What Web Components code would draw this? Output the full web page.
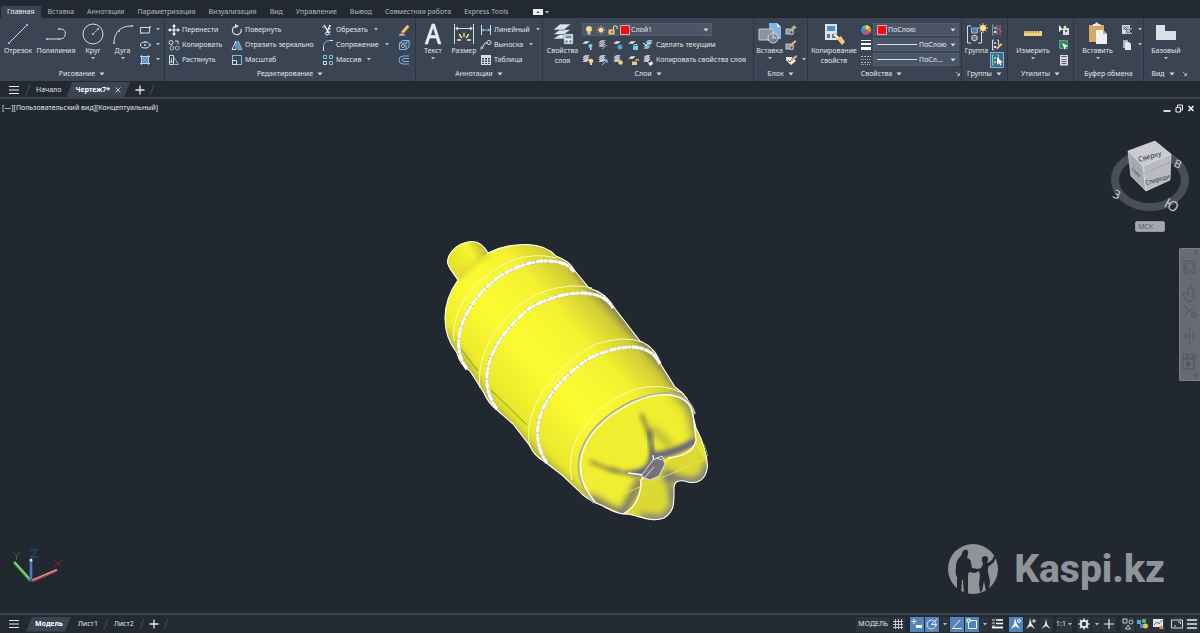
<!DOCTYPE html>
<html lang="ru">
<head>
<meta charset="utf-8">
<title>Чертеж7</title>
<style>
html,body{height:100%;margin:0}
body{background:#212830;color:#e2e5e9;font:7px/10px "Noto Sans","Open Sans",sans-serif;overflow:hidden}
</style>
</head>
<body>
<cad-app></cad-app>
<script>
const define = (name, css, html) => customElements.define(name, class extends HTMLElement {
  constructor() { super(); this.attachShadow({ mode: 'open' }); }
  connectedCallback() {
    const t = document.createElement('template');
    t.innerHTML = `<style>*{box-sizing:border-box}button,select{font:inherit;color:inherit;background:none;border:0;padding:0;margin:0;white-space:nowrap}${css}</style>${html(this)}`;
    this.shadowRoot.replaceChildren(t.content.cloneNode(true));
  }
});
const at = (e, n) => e.getAttribute(n) || '';

/* ---------- icons ---------- */
const W = '#d9dde2', B = '#7fc0e6', G = '#ffd479';
const dot = (x, y, c = B) => `<rect x="${x - 1}" y="${y - 1}" width="2" height="2" fill="${c}"/>`;
const sheets = (x, y, n, c = W) => Array.from({ length: n }, (_, i) => `<path d="M${x} ${y + i * 2 + 3}l3-3h5l-3 3z" fill="${c}" stroke="#3b4453" stroke-width=".4"/>`).join('');
const bulb = (x, y, c = G) => `<circle cx="${x}" cy="${y}" r="2.3" fill="${c}"/><rect x="${x - 1}" y="${y + 2}" width="2" height="2" fill="#cfd3d8"/>`;
const pencil = (x, y) => `<path d="M${x} ${y}l5-5 1.4 1.4-5 5z" fill="#e9b872"/>`;
const blk = `<rect x="1" y="5" width="7" height="5" fill="#8d949e" stroke="${W}" stroke-width=".8"/><circle cx="6.5" cy="8.5" r="2" fill="#59616e" stroke="${W}" stroke-width=".8"/>`;
const I = {
  line: [24, 24, `<path d="M3 21L21 3" stroke="${W}" stroke-width="1"/>${dot(3, 21)}${dot(21, 3)}`],
  pline: [24, 24, `<path d="M2 17H16c7 0 7-10 1-10h-3" fill="none" stroke="${W}"/>${dot(3, 17)}${dot(15, 17)}${dot(15, 7)}`],
  circle: [24, 24, `<circle cx="12" cy="12" r="10" fill="none" stroke="${W}"/><path d="M12 12l5-5" stroke="${B}"/>${dot(12, 12)}${dot(17, 7)}`],
  arc: [24, 24, `<path d="M3 21C3 10 10 4 20 4" fill="none" stroke="${W}"/>${dot(3, 21)}${dot(8, 9)}${dot(21, 4)}`],
  rect: [12, 12, `<path d="M1.500 3.500h9v5.500h-9z" fill="none" stroke="${W}"/>${dot(2, 9)}${dot(11, 3)}`],
  ellipse: [12, 12, `<ellipse cx="6" cy="6" rx="4.500" ry="3" fill="none" stroke="${W}"/>${dot(6, 6)}${dot(11, 6)}${dot(6, 3)}`],
  hatch: [12, 12, `<path d="M2 2h8v8H2z" fill="#5a8fc4"/><path d="M1 2.500h10M1 9.500h10M2.500 1v10M9.500 1v10" stroke="${W}" stroke-width=".8"/><path d="M4 4l4 4M4 7l1 1M7 4l1 1" stroke="#a9d2f0" stroke-width=".6"/>`],
  move: [12, 12, `<path d="M6 1v10M1 6h10" stroke="#fff" stroke-width="1.200"/><path d="M6 0L4 2.500h4zM6 12L4 9.500h4zM0 6l2.500-2v4zM12 6L9.500 4v4z" fill="#fff"/>`],
  copy: [12, 12, `<g fill="none"><circle cx="3" cy="3.500" r="2" stroke="${W}"/><path d="M7 2h3v3" stroke="${W}"/><circle cx="4" cy="9" r="2" stroke="${B}"/><circle cx="9.300" cy="9" r="2" stroke="${B}"/></g>`],
  stretch: [12, 12, `<path d="M1.500 1.500h4v9h-4z" fill="none" stroke="${W}"/><path d="M5.500 3l5 7.500h-5" fill="none" stroke="${B}"/><path d="M3.500 4v4M2 8h4" stroke="#fff" stroke-width=".7"/>`],
  rotate: [12, 12, `<path d="M5 2a4.400 4.400 0 1 0 5 3" fill="none" stroke="${W}" stroke-width="1.200"/><path d="M4 0l4 2-4 2.500z" fill="${W}"/>`],
  mirror: [12, 12, `<path d="M5 2v8.500H1z" fill="none" stroke="${W}"/><path d="M7 2v8.500h4z" fill="#4b86bd" stroke="${B}"/>`],
  scale: [12, 12, `<path d="M1.500 1.500h9v9h-9z" fill="none" stroke="${B}"/><path d="M1.500 6.500h4v4h-4z" fill="none" stroke="${W}"/>`],
  trim: [12, 12, `<path d="M2 1l5 8M8 1L5 8" stroke="#fff" stroke-width="1.300"/><path d="M8 1v10" stroke="${W}" stroke-dasharray="2 1"/><circle cx="5" cy="9.500" r="1.500" fill="none" stroke="#fff"/><path d="M0 3h3" stroke="${B}"/>`],
  fillet: [12, 12, `<path d="M1.500 12V8C1.500 4 4 1.500 8 1.500h3" fill="none" stroke="${B}"/><path d="M1.500 12V8M8 1.500h3" stroke="${W}"/>`],
  array: [12, 12, `<g fill="none" stroke="${B}"><path d="M1.500 1.500h3v3h-3zM7.500 1.500h3v3h-3zM7.500 7.500h3v3h-3z"/><path d="M1.500 7.500h3v3h-3z" stroke="${W}"/></g>`],
  erase: [12, 12, `<path d="M3 8l6-7 2.500 1.500L6 9z" fill="#f2c078"/><path d="M3 8l3 1-1 2H2z" fill="#e5726b"/><path d="M1 11h6" stroke="${W}"/>`],
  box: [12, 12, `<path d="M1.500 4h6.500v6.500h-6.500zM1.500 4l3-2.500h6.500L8 4M11 1.500V8l-3 2.500" fill="none" stroke="${B}"/><circle cx="5" cy="7" r="1.600" fill="none" stroke="${W}" stroke-width=".7"/>`],
  offset: [12, 12, `<path d="M11 2H5a4 4 0 0 0 0 8h6M11 4.500H6a1.500 1.500 0 0 0 0 3h5" fill="none" stroke="${B}" stroke-width=".9"/>`],
  text: [24, 24, `<path d="M4 22L11 2h2.500L20 22h-2.800l-1.900-6H8.600l-1.900 6zM9.500 13.500h5.200L12.200 5z" fill="#eceef0" stroke="#eceef0" stroke-width=".6"/>`],
  dim: [24, 24, `<path d="M2.500 2v20M21.500 2v20M4 6.500h16" stroke="${W}"/><path d="M3 6.500l3-2v4zM21 6.500l-3-2v4z" fill="${W}"/><path d="M12 11v4M7 12l3 4M17 12l-3 4M5 18h4M19 18h-4" stroke="#ffe2a0" stroke-width="1.300"/>`],
  linear: [12, 12, `<path d="M1.500 1v10M10.500 1v10" stroke="${W}"/><path d="M2 6h8" stroke="${B}"/><path d="M2 6l2-1.500v3zM10 6L8 4.500v3z" fill="${B}"/>`],
  leader: [12, 12, `<circle cx="9" cy="3.500" r="2" fill="none" stroke="${W}"/><path d="M7 4H5L2 9" fill="none" stroke="${W}"/><path d="M0 11l1-4 3 2z" fill="${B}"/>`],
  table: [12, 12, `<path d="M1 1h10v10H1z" fill="${W}"/><path d="M2 4h2v1.500H2zM5 4h2v1.500H5zM8 4h2v1.500H8zM2 6.500h2V8H2zM5 6.500h2V8H5zM8 6.500h2V8H8zM2 9h2v1H2zM5 9h2v1H5zM8 9h2v1H8z" fill="#3b4453"/>`],
  layers: [24, 24, `<g fill="#dfe2e6" stroke="#3b4453" stroke-width=".6"><path d="M2 17l7-5h11l-7 5z"/><path d="M2 12.500l7-5h11l-7 5z"/><path d="M2 8l7-6h11l-7 6z"/></g><path d="M13 12h9v10h-9z" fill="#e9edf0" stroke="#7a8797" stroke-width=".6"/><path d="M14.500 13.500h6v3h-6z" fill="#5b97cc"/><path d="M14.500 18.500h2v2h-2zM18.500 18.500h2v2h-2z" fill="#5c6673"/>`],
  bulb: [12, 12, `<circle cx="6" cy="5" r="3" fill="#ffd58a"/><path d="M4.500 7.500h3v3h-3z" fill="#d7c9a8"/>`],
  sun: [12, 12, `<path d="M6 1.500v9M1.500 6h9M3 3l6 6M9 3l-6 6" stroke="#f0c26c" stroke-width=".8"/><circle cx="6" cy="6" r="2.300" fill="#ffd98f"/>`],
  unlock: [12, 12, `<path d="M1.500 5.500h6v5h-6z" fill="#f3c878"/><path d="M6.500 5.500V3.500a1.800 1.800 0 0 1 3.600 0V5" fill="none" stroke="#e9d3a4" stroke-width="1.100"/><path d="M4 7h1.500v2H4z" fill="#5b4a2a"/>`],
  red: [12, 12, `<path d="M1.500 1.500h9v9h-9z" fill="#f30b12" stroke="#f1c9cb" stroke-width=".8"/>`],
  l1: [12, 12, sheets(0, 2, 1) + `<circle cx="8.500" cy="7" r="2" fill="#7fd6e8"/><path d="M8 9h1.500v2H8z" fill="#d5dae0"/>`],
  l2: [12, 12, sheets(1, 1, 3, '#bfc5cd') + `<path d="M5 10l5-4" stroke="#7fc0e6"/>`],
  l3: [12, 12, sheets(1, 2, 1) + `<path d="M8 5v6M5 8h6M6 6l4 4M10 6l-4 4" stroke="#5cc3ea" stroke-width=".9"/>`],
  l4: [12, 12, sheets(1, 2, 1) + `<path d="M6 7h5v4H6z" fill="#6ed2ef"/><path d="M7 7V5.500h3V7" fill="none" stroke="#bfe9f5" stroke-width=".8"/>`],
  l5: [12, 12, sheets(1, 5, 2, '#8dc4ea') + sheets(3, 1, 2, '#a8d4f2') + `<path d="M1 4l4 3" stroke="#fff"/>`],
  m1: [12, 12, sheets(0, 1, 3) + bulb(9, 7)],
  m2: [12, 12, sheets(1, 1, 3) + `<path d="M5 11l5-5M10 6v3M10 6H7" stroke="#a3d4f4"/>`],
  m3: [12, 12, sheets(1, 1, 3) + `<circle cx="8.500" cy="8.500" r="2.200" fill="${G}"/>`],
  m4: [12, 12, sheets(1, 2, 1) + `<path d="M5 7.500h5v3.500H5z" fill="#f3c878"/><path d="M9 7V5.500h2.500V7" fill="none" stroke="#f5deb0" stroke-width=".8"/>`],
  m5: [12, 12, sheets(1, 1, 3) + `<path d="M5 7l2 2 3-2 1 3-3 2z" fill="#eef0f2"/>`],
  insert: [24, 24, `<path d="M11 1h8l4 4v12H11z" fill="#7db7e4"/><path d="M19 1v4h4z" fill="#d5eafa"/><path d="M1 7h14v11H1z" fill="#8b929c" stroke="#c6cbd1"/><circle cx="15" cy="16" r="5" fill="#7a828d" fill-opacity=".8" stroke="#d5d9de"/><path d="M15 12v4h3" fill="none" stroke="#d5d9de"/>`],
  b1: [12, 12, blk + `<path d="M9 1v5M6.500 3.500h5M7.500 2l3 3M10.500 2l-3 3" stroke="${G}" stroke-width=".7"/>`],
  b2: [12, 12, blk + pencil(5, 6)],
  b3: [12, 12, `<path d="M1 3h6l4 4-5 4-5-5z" fill="#eceef0"/><path d="M3 6l2 2 4-6" fill="none" stroke="#4a5362"/>` + pencil(6, 6)],
  matchp: [24, 24, `<path d="M3 2h12v16H3z" fill="#dfe3e7"/><path d="M5 4h8v5H5z" fill="#4d8fc7"/><path d="M5 12h3v4H5zM10 12h3v4h-3z" fill="#6a7380"/><path d="M11 13l5 5 2-2-5-5z" fill="#f6f0e4" stroke="#7b7362" stroke-width=".5"/><path d="M15 17l4-3 4 6-3 3z" fill="#edc88a"/>`],
  wheel: [12, 12, `<path d="M6 6V1a5 5 0 0 1 4.300 2.500z" fill="#f5e14b"/><path d="M6 6l4.300-2.500a5 5 0 0 1 0 5z" fill="#f0913a"/><path d="M6 6l4.300 2.500A5 5 0 0 1 6 11z" fill="#e8445a"/><path d="M6 6v5a5 5 0 0 1-4.300-2.500z" fill="#9a59d6"/><path d="M6 6L1.700 8.500a5 5 0 0 1 0-5z" fill="#3f8fe0"/><path d="M6 6L1.700 3.500A5 5 0 0 1 6 1z" fill="#57c267"/>`],
  weight: [12, 12, `<path d="M1 1.500h10" stroke="#fff"/><path d="M1 5h10" stroke="#fff" stroke-width="2"/><path d="M1 9.500h10" stroke="#fff" stroke-width="3"/>`],
  ltype: [12, 12, `<path d="M1 2.500h10M1 8.500h10" stroke="#aeb5be" stroke-dasharray="2 1"/><path d="M1 5.500h10M1 10.500h10" stroke="#aeb5be" stroke-dasharray="1 1"/>`],
  group: [24, 24, `<path d="M6 4H2.500v17H6M13 21h3.500V10" fill="none" stroke="${W}"/><path d="M6.500 6h6v5h-6z" fill="#4b7fb3" stroke="${B}"/><circle cx="9.500" cy="16" r="2.800" fill="#6a7481" stroke="${W}"/><path d="M18 1v10M13 6h10M14.500 2.500l7 7M21.500 2.500l-7 7" stroke="#f3bf62"/><circle cx="18" cy="6" r="3" fill="#ffdc96"/>`],
  g1: [12, 12, `<path d="M3 1H1.500v10H3M6 1v10" fill="none" stroke="#8d96a3"/><circle cx="4" cy="4" r="1.300" fill="${B}"/><circle cx="4" cy="8" r="1.300" fill="${W}"/><path d="M9 1v10M7 4l4 4" stroke="#d85d66"/>`],
  g2: [12, 12, `<path d="M3 1H1.500v10H3M6 1h1.500v5" fill="none" stroke="${W}"/><circle cx="4" cy="4" r="1.300" fill="${B}"/><circle cx="4" cy="8" r="1.300" fill="${W}"/>` + pencil(5, 9)],
  g3: [12, 12, `<path d="M3 1H1.500v10H3M6 1h1.500v4" fill="none" stroke="#6fe0a0"/><circle cx="4" cy="4" r="1.200" fill="#6fe0a0"/><circle cx="4" cy="8" r="1.200" fill="#6fe0a0"/><path d="M6 3v8l2-2 1.500 2.500 1-.6L9.300 8.500H12z" fill="#fff"/>`],
  ruler: [24, 24, `<path d="M3 9h18v5H3z" fill="#f1cf7e"/><path d="M5 9v2M7.500 9v2M10 9v2M12.500 9v2M15 9v2M17.500 9v2" stroke="#7b6634" stroke-width=".7"/>`],
  u1: [12, 12, `<path d="M5 4h6v7H5z" fill="${W}"/><path d="M7 6h2v2H7z" fill="#59616e"/><path d="M1 1v7l2-2h2z" fill="#fff"/><circle cx="7" cy="3" r="1.500" fill="${G}"/>`],
  u2: [12, 12, `<path d="M1.500 1.500h8v8h-8z" fill="#2f8a5a" stroke="#56c98a" stroke-dasharray="2 1"/><path d="M4 4l6 3-2.500 1L7 11z" fill="#fff"/>`],
  calc: [12, 12, `<path d="M2 1h8v10.500H2z" fill="${W}"/><path d="M3 2.500h6M3.500 5.500h5M3.500 7.500h5M3.500 9.500h5" stroke="#4c5563" stroke-width=".9"/>`],
  paste: [24, 24, `<path d="M3 3h15v17H3z" fill="#d7a765"/><path d="M7 4V2h2a1.800 1.800 0 0 1 3.500 0h2v2z" fill="#e8eaec"/><path d="M10 8h7l4 4v10H10z" fill="#eef0f2"/><path d="M17 8v4h4z" fill="#aab1ba"/>`],
  cut: [12, 12, `<path d="M1 1h8v9H1z" fill="${W}"/><path d="M2 3h6M2 5h4" stroke="#59616e" stroke-width=".8"/><path d="M4 4l7 6M11 4L5 9" stroke="#2d3542" stroke-width="2"/><path d="M4 4l7 6M11 4L5 9" stroke="#fff" stroke-width=".9"/>`],
  pages: [12, 12, `<path d="M2 1h5v8H2z" fill="#aab1ba"/><path d="M4 3h4l2 2v6H4z" fill="#e6e8eb"/>`],
  base: [24, 24, `<path d="M2 3h9v6h11v9H2z" fill="#dcdfe4"/>`],
  /* bars */
  menu: [12, 12, `<path d="M1 2.500h10M1 6h10M1 9.500h10" stroke="#e6e8eb" stroke-width="1.200"/>`],
  plus: [12, 12, `<path d="M6 1.500v9M1.500 6h9" stroke="#e6e8eb" stroke-width="1.300"/>`],
  slash: [8, 14, `<path d="M2 12L6 2" stroke="#454e5c"/>`],
  close: [8, 8, `<path d="M1.500 1.500l5 5M6.500 1.500l-5 5" stroke="#c3c8cf"/>`],
  caret: [6, 4, `<path d="M.5.500h5L3 3.500z" fill="#d5d9de"/>`],
  mini: [4, 3, `<path d="M0 0h4L2 2.500z" fill="#b9bfc8"/>`],
  launch: [6, 6, `<path d="M1 1l3 3M4.500 2v2.500H2" fill="none" stroke="#b9bfc8" stroke-width=".9"/>`],
  ribbonmin: [10, 6, `<path d="M0 0h10v6H0z" fill="#f0f1f3"/><path d="M3.500 4h3L5 2z" fill="#3b4453"/>`],
  wmin: [10, 10, `<path d="M1.500 8h7" stroke="#f0f1f3" stroke-width="1.800"/>`],
  wres: [10, 10, `<path d="M2 4.500h4.500V9H2zM3.500 4V2h5v5H7" fill="none" stroke="#f0f1f3"/>`],
  wclose: [10, 10, `<path d="M2.500 3l5 5M7.500 3l-5 5" stroke="#f0f1f3" stroke-width="1.600"/>`],
  sgrid: [14, 14, `<path d="M4.500 2v10M7.500 2v10M10.500 2v10M2 4.500h10M2 7.500h10M2 10.500h10" stroke="#cfd4da" stroke-width=".9"/>`],
  sdyn: [14, 14, `<path d="M4 2v5M1.500 4.500h5" stroke="#fff"/><path d="M6 8h6v3H6z" fill="#fff"/>`],
  spolar: [14, 14, `<circle cx="6.500" cy="7.500" r="4.500" fill="none" stroke="#dfeaf5"/><path d="M6.500 7.500L12 2M6.500 7.500H12" stroke="#dfeaf5"/>`],
  sang: [14, 14, `<path d="M12 11.500H2.500L10 3" fill="none" stroke="#e7eff7"/>`],
  sosnap: [14, 14, `<path d="M3.500 3.500h8v8h-8z" fill="none" stroke="#e7eff7"/><path d="M2 2h3v3H2z" fill="#5384b8" stroke="#fff"/>`],
  slw: [14, 14, `<path d="M2 3h3M2 6h3M2 9h3" stroke="#d5d9de"/><path d="M6 3h7M6 6.500h7" stroke="#fff" stroke-width="1.400"/><path d="M2 10.500h11" stroke="#fff" stroke-width="1.800"/>`],
  sann: [14, 14, `<path d="M6 1l1.500 5.500 3.500 5.500-4.500-3L2 12l3-5z" fill="#fff"/><circle cx="10" cy="4" r="1.500" fill="none" stroke="#fff"/>`],
  sann2: [14, 14, `<path d="M6 1l1.500 5.500 3.500 5.500-4.500-3L2 12l3-5z" fill="#e8eaed"/><path d="M10 2v4M8 4h4" stroke="#e8eaed"/>`],
  sann3: [14, 14, `<path d="M7 2l1.200 5.500 3.500 4.500L7 9l-4.700 3 3.500-4.500z" fill="#e8eaed"/>`],
  sgear: [14, 14, `<circle cx="7" cy="7" r="3.200" fill="none" stroke="#eceef0" stroke-width="1.800"/><path d="M7 1.500v2M7 10.500v2M1.500 7h2M10.500 7h2M3 3l1.500 1.500M9.500 9.500L11 11M11 3L9.500 4.500M3 11l1.500-1.500" stroke="#eceef0" stroke-width="1.500"/>`],
  splus: [14, 14, `<path d="M7 2v10M2 7h10" stroke="#e6e8eb" stroke-width="1.200"/>`],
  siso: [14, 14, `<g fill="none" stroke="#cfd4da" stroke-width=".9"><path d="M2 2h4v4H2zM4.500 12h5L7 8z"/><circle cx="10" cy="5" r="2"/></g>`],
  sperf: [14, 14, `<path d="M1 3h4v4H1z" fill="#5aa3dc"/><path d="M6 2h4v4H6z" fill="#58b067"/><path d="M4 7h4v4H4z" fill="#4d7fd0"/><circle cx="9.500" cy="9" r="2.500" fill="#e7c34f"/>`],
  sclean: [14, 14, `<path d="M2 2h10v8H2z" fill="#dfe2e6"/><path d="M3 8l3-3 2 2 3-4" fill="none" stroke="#6a7380"/><path d="M8 12l2-4 3 4z" fill="#e08a3c"/>`],
  sfull: [14, 14, `<path d="M1.500 3h11v8h-11z" fill="none" stroke="#d5d9de"/><path d="M8 5h2.500v2M4 9h2" fill="none" stroke="#d5d9de"/>`],
  smenu: [14, 14, `<path d="M2 3h10M2 7h10M2 11h10" stroke="#e6e8eb" stroke-width="1.300"/>`]
};
define('cad-icon', ':host{display:block;flex:none}svg{display:block}', e => {
  const [w, h, s] = I[at(e, 'name')];
  return `<svg width="${w}" height="${h}" viewBox="0 0 ${w} ${h}" aria-hidden="true">${s}</svg>`;
});
const ico = n => `<cad-icon name="${n}"></cad-icon>`;

/* ---------- ribbon ---------- */
define('cad-panel', `
:host{display:flex;flex-direction:column;min-width:0;border-right:1px solid #2d3542;padding-top:4px}
:host([last]){border:0}
.body{display:grid;grid-template-columns:var(--cols);height:45px;padding-left:var(--pad,0px)}
footer{display:flex;height:14px;align-items:center}
.t{flex:1;display:flex;gap:4px;align-items:center;justify-content:center;white-space:nowrap}`,
  e => `<div class="body"><slot></slot></div><footer><button class="t">${at(e, 'label')}${e.hasAttribute('plain') ? '' : ico('caret')}</button>${e.hasAttribute('launch') ? `<button aria-label="Параметры">${ico('launch')}</button>` : ''}</footer>`);

define('cad-tool', `
:host{display:block;min-width:0}
button{display:flex;flex-direction:column;align-items:center;width:100%;line-height:10px}
.l{display:flex;justify-content:center;white-space:nowrap;text-align:center}
cad-icon[name=mini]{margin-top:1px}`,
  e => `<button>${ico(at(e, 'icon'))}<span class="l"><span>${at(e, 'label').replace('|', '<br>')}</span></span>${e.hasAttribute('caret') ? ico('mini') : ''}</button>`);

define('cad-stack', `:host{display:grid;grid-template-rows:repeat(3,15px);align-items:center;justify-items:start;min-width:0}`, () => '<slot></slot>');
define('cad-row', `:host{display:flex;align-items:center;gap:3px}`, () => '<slot></slot>');

define('cad-cmd', `
:host{display:block}
button{display:flex;align-items:center;gap:2px;height:14px}
cad-icon[name=mini]{margin-left:4px}
:host(:not([label])) cad-icon[name=mini]{margin-left:3px}
:host([on]) button{background:#3f6a96;outline:1px solid #7fb0dc}`,
  e => `<button aria-label="${at(e, 'label') || at(e, 'hint')}">${ico(at(e, 'icon'))}${at(e, 'label')}${e.hasAttribute('caret') ? ico('mini') : ''}</button>`);

define('cad-select', `
:host{display:block}
label{display:flex;align-items:center;height:13px;padding:0 2px 0 var(--in,0px);background:#4a5567;border:1px solid #525d6f}
select{appearance:none;flex:1;min-width:0;height:10px;outline:0;overflow:hidden}
::slotted(hr){flex:none;width:40px;border:0;border-top:1px solid #dfe3e8;margin:0 2px 0 3px}`,
  e => `<label><slot></slot><select aria-label="${at(e, 'hint')}"><option>${at(e, 'value')}</option></select>${ico('caret')}</label>`);

const tool = (i, l, c = 1) => `<cad-tool icon="${i}" label="${l}" ${c ? 'caret' : ''}></cad-tool>`;
const cmd = (i, l, c) => `<cad-cmd icon="${i}" label="${l}" ${c ? 'caret' : ''}></cad-cmd>`;
const act = (i, h, c) => `<cad-cmd icon="${i}" hint="${h}" ${c ? 'caret' : ''}></cad-cmd>`;
const stack = (...a) => `<cad-stack>${a.join('')}</cad-stack>`;

define('cad-ribbon', `
:host{display:grid;background:#3b4453;height:63px;
grid-template-columns:minmax(0,165fr) minmax(0,251fr) minmax(0,127fr) minmax(0,211fr) minmax(0,54fr) minmax(0,154fr) minmax(0,46fr) minmax(0,66fr) minmax(0,70fr) minmax(0,44fr) minmax(0,12fr)}
.layer{width:130px;--in:0px}
.prop{width:calc(100% - 2px)}`, () => `
<cad-panel label="Рисование" style="--cols:36fr 40fr 34fr 25fr 29fr">
${tool('line', 'Отрезок', 0)}${tool('pline', 'Полилиния', 0)}${tool('circle', 'Круг')}${tool('arc', 'Дуга')}
<cad-stack style="padding-left:4px">${act('rect', 'Прямоугольник', 1)}${act('ellipse', 'Эллипс', 1)}${act('hatch', 'Штриховка', 1)}</cad-stack></cad-panel>
<cad-panel label="Редактирование" style="--pad:3px;--cols:63fr 91fr 76fr 17fr">
${stack(cmd('move', 'Перенести'), cmd('copy', 'Копировать'), cmd('stretch', 'Растянуть'))}
${stack(cmd('rotate', 'Повернуть'), cmd('mirror', 'Отразить зеркально'), cmd('scale', 'Масштаб'))}
${stack(cmd('trim', 'Обрезать', 1), cmd('fillet', 'Сопряжение', 1), cmd('array', 'Массив', 1))}
${stack(act('erase', 'Стереть'), act('box', 'Расчленить'), act('offset', 'Подобие'))}</cad-panel>
<cad-panel label="Аннотации" style="--pad:2px;--cols:30fr 32fr 62fr">
${tool('text', 'Текст')}${tool('dim', 'Размер', 0)}
${stack(cmd('linear', 'Линейный', 1), cmd('leader', 'Выноска', 1), cmd('table', 'Таблица'))}</cad-panel>
<cad-panel label="Слои" style="--cols:39fr 171fr">
${tool('layers', 'Свойства|слоя', 0)}
${stack(`<cad-select class="layer" value="Слой1" hint="Слой">${['bulb', 'sun', 'unlock', 'red'].map(ico).join('')}</cad-select>`,
    `<cad-row>${act('l1', 'Отключить слой')}${act('l2', 'Изолировать')}${act('l3', 'Заморозить')}${act('l4', 'Блокировать')}${cmd('l5', 'Сделать текущим')}</cad-row>`,
    `<cad-row>${act('m1', 'Включить слои')}${act('m2', 'Отменить изоляцию')}${act('m3', 'Разморозить')}${act('m4', 'Разблокировать')}${cmd('m5', 'Копировать свойства слоя')}</cad-row>`)}</cad-panel>
<cad-panel label="Блок" style="--cols:31fr 22fr">
${tool('insert', 'Вставка')}${stack(act('b1', 'Создать'), act('b2', 'Редактировать'), act('b3', 'Атрибуты', 1))}</cad-panel>
<cad-panel label="Свойства" launch style="--cols:52fr 13fr 88fr">
${tool('matchp', 'Копирование|свойств', 0)}
${stack(ico('wheel'), ico('weight'), ico('ltype'))}
${stack(`<cad-select class="prop" value="ПоСлою" hint="Цвет" style="--in:2px">${ico('red')}</cad-select>`,
    `<cad-select class="prop" value="ПоСлою" hint="Вес линий"><hr></cad-select>`,
    `<cad-select class="prop" value="ПоСл..." hint="Тип линий"><hr></cad-select>`)}</cad-panel>
<cad-panel label="Группы" style="--cols:29fr 16fr">
${tool('group', 'Группа', 0)}${stack(act('g1', 'Разгруппировать'), act('g2', 'Изменить группу'), '<cad-cmd on icon="g3" hint="Выбор групп"></cad-cmd>')}</cad-panel>
<cad-panel label="Утилиты" style="--cols:50fr 15fr">
${tool('ruler', 'Измерить')}${stack(act('u1', 'Быстрый выбор'), act('u2', 'Выбрать все'), act('calc', 'Калькулятор'))}</cad-panel>
<cad-panel label="Буфер обмена" plain style="--cols:47fr 22fr">
${tool('paste', 'Вставить')}${stack(act('cut', 'Вырезать', 1), act('pages', 'Копировать', 1))}</cad-panel>
<cad-panel label="Вид" launch last style="--cols:1fr">${tool('base', 'Базовый')}</cad-panel>`);

define('cad-tabs', `
:host{display:flex;gap:1px;height:18px;padding:6px 0 0 1px;background:#222933;color:#b3b9c2}
button{height:12px;padding:0 6px;line-height:12px}
.on{background:#3b4453;color:#f2f3f5}
.min{display:flex;align-items:center;gap:2px;margin-left:12px}`, () =>
  ['Главная', 'Вставка', 'Аннотации', 'Параметризация', 'Визуализация', 'Вид', 'Управление', 'Вывод', 'Совместная работа', 'Express Tools']
    .map((t, i) => `<button class="${i ? '' : 'on'}">${t}</button>`).join('') +
  `<button class="min" aria-label="Свернуть ленту">${ico('ribbonmin')}${ico('mini')}</button>`);

/* ---------- document and layout tabs ---------- */
define('cad-sheet', `
:host{display:block}
button{display:flex;align-items:center;gap:4px;height:15px;padding:0 4px}
:host([on]) button{padding:0 8px 0 9px;font-weight:700;color:#fff;background:#3b4453;clip-path:polygon(6px 0,100% 0,calc(100% - 6px) 100%,0 100%)}`,
  () => '<button><slot></slot></button>');

define('cad-doctabs', `
:host{display:flex;align-items:center;height:18px;padding:1px 0 0 8px;background:#222933;border-bottom:2px solid #3a4350}
.m{margin-right:4px}.p{margin:0 2px 0 4px}cad-sheet[on]{margin-left:1px}`, () => `
<button class="m" aria-label="Меню">${ico('menu')}</button>${ico('slash')}
<cad-sheet>Начало</cad-sheet><cad-sheet on>Чертеж7*${ico('close')}</cad-sheet>
<button class="p" aria-label="Новый чертеж">${ico('plus')}</button>${ico('slash')}`);

define('cad-status', `
:host{display:flex;justify-content:space-between;height:20px;background:#222933;border-top:2px solid #3a4350}
div{display:flex;align-items:center}
.m{margin:0 6px 0 8px}.p{margin:0 2px}
cad-sheet[on]{margin-right:3px}
.r{gap:1px;padding-right:1px}
.r button{height:15px;min-width:14px;padding:0;display:flex;align-items:center;justify-content:center;background:#2c3440}
.r .on{background:#5384b8}
.r .c{min-width:9px}
.r .t{padding:0 2px}
.g{margin-left:4px}
.s{gap:2px;margin-left:2px}`, () => {
  const b = (n, h, c = '') => `<button class="${c}" aria-label="${h}">${ico(n)}</button>`;
  return `<div><button class="m" aria-label="Листы">${ico('menu')}</button>
<cad-sheet on>Модель</cad-sheet><cad-sheet>Лист1</cad-sheet>${ico('slash')}<cad-sheet>Лист2</cad-sheet>${ico('slash')}
<button class="p" aria-label="Новый лист">${ico('plus')}</button>${ico('slash')}</div>
<div class="r"><button class="t">МОДЕЛЬ</button>${b('sgrid', 'Сетка')}${b('sdyn', 'Динамический ввод', 'on g')}${b('spolar', 'Полярное отслеживание', 'on')}${b('mini', 'Параметры', 'c')}
${b('sang', 'Отслеживание', 'on')}${b('sosnap', 'Привязка', 'on')}${b('mini', 'Параметры', 'c')}${b('slw', 'Вес линий')}
${b('sann', 'Аннотации', 'on g')}${b('sann2', 'Автомасштаб')}${b('sann3', 'Масштаб')}<button class="s">1:1${ico('mini')}</button>
${b('sgear', 'Рабочее пространство', 'g')}${b('mini', 'Параметры', 'c')}${b('splus', 'Монитор')}${b('siso', 'Изоляция', 'g')}${b('sperf', 'Производительность')}${b('sclean', 'Отчет')}${b('sfull', 'Полный экран', 'g')}${b('smenu', 'Адаптация')}</div>`;
});

/* ---------- drawing area ---------- */
const BODY = 'M458 280C452 271 447 266 447.500 261C449 250 460 242 472 241.500Q481 241 488 253C500 247 513 244 527 244.500C541 245 550 249 556 256Q570 261 575 271L589 288Q606 293 613 306L640 341Q656 348 660 363L675 387Q690 397 692 412L696 428C704 443 707 456 707.500 466C706 481 697 484 688 482Q675 478 674 487C674 503 675 511 664 518C652 523 640 516 628 514Q618 515 603 506Q586 500 578 490L562 475L545 462Q534 456 530 446L513 424L497 410Q488 403 484 393L470 371Q460 365 457 353Q445 338 445 318Q445 298 458 280Z';
const THICK = ['M467 369C448 344 463 305 497 278Q525 260 550 261Q568 262 574 272', 'M497 409C475 380 490 340 530 308Q556 293 583 293Q606 294 613 308', 'M547 463C524 430 545 388 588 359Q612 347 632 347Q653 348 660 364'];
const THIN = ['M454 341C450 310 475 278 510 261Q535 252 556 258', 'M480 388C475 350 505 305 548 290Q575 283 592 288', 'M530 447C521 410 555 365 596 344Q625 335 642 342', 'M572 480C563 440 595 405 633 390Q662 381 684 394'];
define('cad-scene', ':host{position:absolute;inset:0}svg{display:block;width:100%;height:100%}', () => `
<svg viewBox="0 99 1200 514" role="img" aria-label="Модель бутылки">
<defs>
<linearGradient id="g" gradientUnits="userSpaceOnUse" x1="495" y1="425" x2="630" y2="303"><stop offset="0" stop-color="#c9c52c"/><stop offset=".14" stop-color="#ebe92c"/><stop offset=".4" stop-color="#fdfc32"/><stop offset=".68" stop-color="#f4f230"/><stop offset=".86" stop-color="#cfca36"/><stop offset="1" stop-color="#8f8b4a"/></linearGradient>
<linearGradient id="n" gradientUnits="userSpaceOnUse" x1="452" y1="270" x2="488" y2="248"><stop offset="0" stop-color="#e3e02c"/><stop offset=".6" stop-color="#f6f42e"/><stop offset="1" stop-color="#b3af3c"/></linearGradient>
<filter id="b2" x="-50%" y="-50%" width="200%" height="200%"><feGaussianBlur stdDeviation="2"/></filter>
<filter id="b3" x="-50%" y="-50%" width="200%" height="200%"><feGaussianBlur stdDeviation="3.500"/></filter>
<filter id="b5" x="-50%" y="-50%" width="200%" height="200%"><feGaussianBlur stdDeviation="6"/></filter>
<clipPath id="c"><path d="${BODY}"/></clipPath>
<clipPath id="cf"><path d="M593 501C563 465 588 425 634 402Q655 393 672 395Q690 398 693 414L696 440Q694 451 668 458L641 478Q640 505 623 514Z"/></clipPath>
</defs>
<path d="${BODY}" fill="url(#g)"/>
<g clip-path="url(#c)">
<path d="M440 235h50v17Q470 262 458 282h-18z" fill="url(#n)"/>
<path d="M460 280Q472 263 490 254" fill="none" stroke="#b1ac34" stroke-width="3" filter="url(#b2)" opacity=".5"/>
<path d="M575 268L612 306L660 362L694 412" fill="none" stroke="#6f6c66" stroke-width="9" filter="url(#b3)" opacity=".65"/>
<path d="M445 330L490 404L545 463L600 508" fill="none" stroke="#8f8b4e" stroke-width="5" filter="url(#b3)" opacity=".75"/>
<path d="M641 478L672 458L696 445L712 470L690 486L674 480L676 515L650 525L622 516Z" fill="#dcd934"/>
<g fill="none" stroke="#67658a" filter="url(#b3)"><path d="M708 462Q708 482 688 482Q676 480 664 472" stroke-width="7"/><path d="M676 488Q676 512 662 519L640 517" stroke-width="6"/><path d="M664 476Q672 484 672 500" stroke-width="4"/></g>
</g>
<g clip-path="url(#cf)">
<path d="M560 380h150v140h-150z" fill="#f0ee30"/>
<path d="M676 390Q700 400 700 440" fill="none" stroke="#69676c" stroke-width="12" filter="url(#b5)"/>
<path d="M650 428Q664 436 672 450" fill="none" stroke="#a8a53a" stroke-width="8" filter="url(#b3)" opacity=".7"/>
<path d="M652 456Q676 454 697 440" fill="none" stroke="#5f5d80" stroke-width="7" filter="url(#b2)"/>
<path d="M641 414Q647 426 650 438" fill="none" stroke="#8d8a42" stroke-width="4" filter="url(#b2)"/>
<path d="M649 430L653 458" fill="none" stroke="#6c6a66" stroke-width="5" filter="url(#b2)"/>
<path d="M590 461Q604 469 620 471" fill="none" stroke="#9a9740" stroke-width="4" filter="url(#b2)"/>
<path d="M608 470Q632 475 646 466L654 448V474L636 476Z" fill="#5f5d80" stroke="#5f5d80" filter="url(#b2)"/>
<path d="M588 497L622 515L642 478" fill="none" stroke="#6e6b72" stroke-width="8" filter="url(#b3)"/>
</g>
<g fill="none" stroke="#fff">
<path d="${BODY}" stroke-width="1.100"/>
${THIN.map(d => `<path d="${d}" stroke="#fbfbb4" stroke-width="1"/>`).join('')}
${THICK.map(d => `<path d="${d}" stroke="#c3c1a0" stroke-width="3.500"/><path d="${d}" stroke="#f4f4ee" stroke-width="1.500"/><path d="${d}" stroke-width="3" stroke-dasharray="5 1 2 2 7 1 3 2"/>`).join('')}
<path d="M594 503C561 465 584 425 632 401Q655 392 670 393Q690 396 695 414" stroke="#b5b38c" stroke-width="2"/>
<path d="M596 503C563 465 586 425 634 402Q655 393 670 395Q690 398 693 414L696 440Q694 449 688 452Q680 457 668 458M623 514Q641 505 641 480L654 466L653 455M628 473L643 475" stroke-width="1.300"/>
<path d="M641 476L653 460L662 456L665 464L659 476L650 480L645 478z" fill="#74727a" stroke="#e6e6e6"/>
<path d="M645 477L654 467M656 458l6 2" stroke="#ddd"/>
</g>
<path d="M461 349L478 371M491 390L527 425M704 444l4 12" stroke="#5fae1e" fill="none"/>
<path d="M616 497L706 459M600 489L560 460" stroke="#e3ea5a" fill="none" stroke-width=".8"/>
</svg>`);

define('cad-cube', `
:host{display:flex;flex-direction:column;align-items:center;gap:4px}
svg{display:block}
button{width:30px;height:11px;border:1px solid #8f969f;border-radius:2px;background:#a3a8af;color:#5a616b;line-height:9px;text-align:left;padding-left:2px}`, () => `
<svg width="82" height="80" viewBox="1109 137 82 80" font-family="Noto Sans,sans-serif">
<ellipse cx="1150" cy="180" rx="35" ry="27" fill="none" stroke="#484f59" stroke-width="8"/>
<g stroke="#eceef0" stroke-width=".6"><path d="M1128 151L1155 141L1171 154L1143 166Z" fill="#c9cbce"/><path d="M1128 151L1143 166L1146 191L1131 176Z" fill="#a7aaae"/><path d="M1143 166L1171 154L1170 180L1146 191Z" fill="#b9bbbe"/></g>
<path d="M1131 162L1144 174L1170 162" fill="none" stroke="#85898f" stroke-width=".6" stroke-dasharray="3 1"/>
<g fill="#2c3139"><text x="1139" y="162" font-size="7" transform="rotate(-16 1139 162)">Сверху</text><text x="1146" y="185" font-size="6" transform="rotate(-16 1146 185)">Спереди</text><text x="1131" y="169" font-size="4" transform="rotate(46 1131 169)">Слева</text></g>
<g fill="#c4c8cd"><text x="1112" y="197" font-size="12" transform="rotate(24 1112 197)">З</text><text x="1173" y="166" font-size="11" transform="rotate(24 1173 166)">В</text><text x="1163" y="206" font-size="14" transform="rotate(30 1163 206)">Ю</text></g>
</svg><button>МСК</button>`);

define('cad-nav', `
:host{display:flex;flex-direction:column;align-items:center;width:21px;height:133px;background:#676c74;border:1px solid #7b8088;border-right:0;border-radius:2px 0 0 2px}
svg{display:block}`, () => `
<svg width="20" height="131" viewBox="0 0 20 131" fill="none" stroke="#50565f" stroke-width="1"><circle cx="16" cy="3.500" r="1.500"/><path d="M4 12h11v12H4z"/><circle cx="9.500" cy="18" r="4"/><path d="M9 30h2M7 52c-4-2-4-7-3-9l4 3v-6h2v-4h2v5h2v8q-2 4-7 3zM3 56l13 12M15 56L4 67"/><circle cx="14" cy="66" r="2.500"/><path d="M9 74h2M9.500 79v16M3 87h13M6 83v8M13 83v8M9 98h2M3 105h4v4H3zM8 105h4v4H8zM13 105h3v4h-3zM3 110h11v10H3z"/><path d="M7 112l4 3-4 3z" fill="#50565f"/><circle cx="16" cy="126" r="1.500"/></svg>`);

define('cad-ucs', ':host{display:block}svg{display:block}', () => `
<svg width="56" height="38" viewBox="9 548 56 38" fill="none">
<path d="M31 581L14 562" stroke="#4fae4a" stroke-width="3"/><path d="M31 580L14.500 562" stroke="#b8e8b0"/>
<path d="M32 581L57 570" stroke="#b8494d" stroke-width="3"/><path d="M32 580L57 569.500" stroke="#eaa8a4"/>
<path d="M31 581V560" stroke="#355f9e" stroke-width="3"/><path d="M31 579V560" stroke="#6d96cf"/><circle cx="31" cy="560" r="1.500" fill="#d6e4f5"/>
<path d="M13 552l3.500 4 3.500-4M16.500 556v4" stroke="#2d6b34"/><path d="M30 550h8l-8 7h8" stroke="#244f8c"/><path d="M54 560l8 7M62 560l-8 7" stroke="#7c2b31"/></svg>`);

define('cad-brand', `
:host{display:flex;align-items:center;gap:16px;color:#909498;font:800 39px/50px Roboto,"Liberation Sans",sans-serif}
svg{display:block}`, () => `
<svg width="50" height="50" viewBox="0 0 50 50"><circle cx="25" cy="25" r="25" fill="#909498"/>
<g fill="#212830"><path d="M14 10q0-4 4-4.500 3 1 2 4.500l-1 4q4 1 4 5l1 5 6 1 3-1 2-4-1-3q-1-5 4-5 4 2 1 6l1 1 4-3 2-4 2 1-2 5-6 5 0 5 2 10-1 7-3 2-2-10-2 10-2 1-1-8 1-9-1-4-4 2-6-1-1 3v18l-4 2-1-15-1 0-1 14-4-3 0-14q-2-2-1-10 0-7 4-10z"/></g></svg><span>Kaspi.kz</span>`);

define('cad-viewport', `
:host{display:block;position:relative;flex:1;min-height:0;background:#212830;overflow:hidden}
header{position:relative;display:flex;justify-content:space-between;padding:4px 4px 0 2px;z-index:1}
.w{display:flex;gap:2px}
cad-cube,cad-nav,cad-ucs,cad-brand{position:absolute}
cad-cube{right:9px;top:38px}cad-nav{right:0;top:149px}cad-ucs{left:9px;bottom:27px}cad-brand{right:35px;bottom:19px}`, () => `
<cad-scene></cad-scene>
<header><span>[—][Пользовательский вид][Концептуальный]</span><span class="w"><button aria-label="Свернуть">${ico('wmin')}</button><button aria-label="Восстановить">${ico('wres')}</button><button aria-label="Закрыть">${ico('wclose')}</button></span></header>
<cad-cube></cad-cube><cad-nav></cad-nav><cad-ucs></cad-ucs><cad-brand></cad-brand>`);

define('cad-app', ':host{display:flex;flex-direction:column;height:100vh}', () =>
  '<cad-tabs></cad-tabs><cad-ribbon></cad-ribbon><cad-doctabs></cad-doctabs><cad-viewport></cad-viewport><cad-status></cad-status>');
</script>
</body>
</html>
